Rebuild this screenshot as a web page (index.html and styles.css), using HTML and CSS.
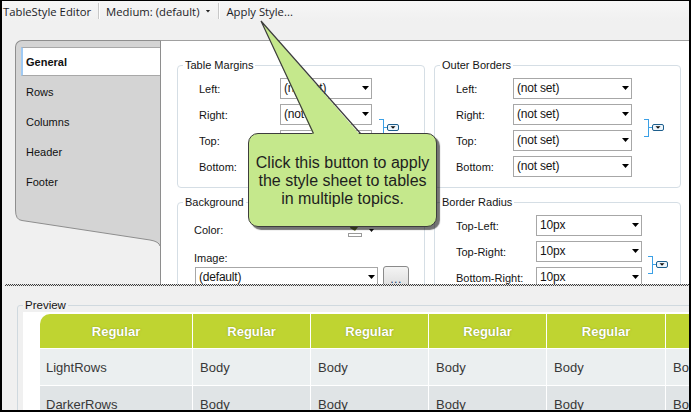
FILE: index.html
```html
<!DOCTYPE html>
<html>
<head>
<meta charset="utf-8">
<title>TableStyle Editor</title>
<link rel="stylesheet" href="styles.css">
</head>
<body>
<div class="screen">
  <div class="toolbar">
    <span class="tb-item">TableStyle Editor</span>
    <span class="tb-sep"></span>
    <span class="tb-item tb-drop">Medium: (default)<span class="tb-arrow"></span></span>
    <span class="tb-sep"></span>
    <span class="tb-item">Apply Style...</span>
  </div>

  <div class="upper">
    <div class="side">
      <div class="tabs">
        <div class="tab active">General</div>
        <div class="tab">Rows</div>
        <div class="tab">Columns</div>
        <div class="tab">Header</div>
        <div class="tab">Footer</div>
      </div>
      <svg class="tabs-foot" width="145" height="45" viewBox="0 0 145 45">
        <path d="M0.5,0 L0.5,5 Q0.5,15 7,15.5 L135,35 Q144,36.5 145,41 L145,0 Z" fill="#d4d4d4"/>
        <path d="M0.5,0 L0.5,5 Q0.5,15 7,15.5 L135,35 Q144,36.5 145,41" fill="none" stroke="#8e8e8e" stroke-width="1"/>
      </svg>
    </div>

    <div class="panel">
      <div class="group">
        <div class="legend">Table Margins</div>
        <div class="fgrid margins">
          <span class="lbl">Left:</span><div class="combo">(not set)<i class="arr"></i></div>
          <span class="lbl">Right:</span><div class="combo">(not set)<i class="arr"></i></div>
          <span class="lbl">Top:</span><div class="combo">(not set)<i class="arr"></i></div>
          <span class="lbl">Bottom:</span><div class="combo">(not set)<i class="arr"></i></div>
          <svg class="bracket" width="20" height="18" viewBox="0 0 20 18">
            <path d="M0,0.5 H4.5 M4.5,0 V18 M0,17.5 H4.5 M4.5,8.5 H8.5" stroke="#3ba0e6" stroke-width="1" fill="none"/>
            <rect x="8.5" y="5.5" width="11" height="6" rx="1.5" fill="#eef6fc" stroke="#1d5e8c"/>
            <polygon points="11.5,7.2 16.5,7.2 14,9.8" fill="#111"/>
          </svg>
        </div>
      </div>

      <div class="group">
        <div class="legend">Outer Borders</div>
        <div class="fgrid outer">
          <span class="lbl">Left:</span><div class="combo">(not set)<i class="arr"></i></div>
          <span class="lbl">Right:</span><div class="combo">(not set)<i class="arr"></i></div>
          <span class="lbl">Top:</span><div class="combo">(not set)<i class="arr"></i></div>
          <span class="lbl">Bottom:</span><div class="combo">(not set)<i class="arr"></i></div>
          <svg class="bracket" width="20" height="18" viewBox="0 0 20 18">
            <path d="M0,0.5 H4.5 M4.5,0 V18 M0,17.5 H4.5 M4.5,8.5 H8.5" stroke="#3ba0e6" stroke-width="1" fill="none"/>
            <rect x="8.5" y="5.5" width="11" height="6" rx="1.5" fill="#eef6fc" stroke="#1d5e8c"/>
            <polygon points="11.5,7.2 16.5,7.2 14,9.8" fill="#111"/>
          </svg>
        </div>
      </div>

      <div class="group">
        <div class="legend">Background</div>
        <div class="bg-body">
          <div class="bg-row">
            <span class="lbl">Color:</span>
            <svg class="swatch" width="30" height="16" viewBox="0 0 30 16">
              <path d="M5,1 L11,5 L8,9 L3,6 Z" fill="#6d7a3a"/>
              <rect x="1.5" y="11.5" width="13" height="3" fill="#fff" stroke="#9a9a9a"/>
              <polygon points="22,7 27,7 24.5,10" fill="#111"/>
            </svg>
          </div>
          <div class="bg-label lbl">Image:</div>
          <div class="bg-img">
            <div class="combo wide">(default)<i class="arr"></i></div>
            <div class="btn">...</div>
          </div>
        </div>
      </div>

      <div class="group">
        <div class="legend">Border Radius</div>
        <div class="fgrid radius">
          <span class="lbl">Top-Left:</span><div class="combo">10px<i class="arr"></i></div>
          <span class="lbl">Top-Right:</span><div class="combo">10px<i class="arr"></i></div>
          <span class="lbl">Bottom-Right:</span><div class="combo">10px<i class="arr"></i></div>
          <span class="lbl">Bottom-Left:</span><div class="combo">10px<i class="arr"></i></div>
          <svg class="bracket" width="20" height="18" viewBox="0 0 20 18">
            <path d="M0,0.5 H4.5 M4.5,0 V18 M0,17.5 H4.5 M4.5,8.5 H8.5" stroke="#3ba0e6" stroke-width="1" fill="none"/>
            <rect x="8.5" y="5.5" width="11" height="6" rx="1.5" fill="#eef6fc" stroke="#1d5e8c"/>
            <polygon points="11.5,7.2 16.5,7.2 14,9.8" fill="#111"/>
          </svg>
        </div>
      </div>
    </div>
  </div>

  <div class="splitter"></div>

  <div class="lower">
    <div class="preview">
      <div class="legend">Preview</div>
      <div class="preview-body">
        <table class="ptable">
          <colgroup>
            <col class="w1"><col class="w2"><col class="w2"><col class="w2"><col class="w3"><col class="w2">
          </colgroup>
          <tr>
            <th class="first">Regular</th><th>Regular</th><th>Regular</th><th>Regular</th><th>Regular</th><th>Regular</th>
          </tr>
          <tr class="light">
            <td>LightRows</td><td>Body</td><td>Body</td><td>Body</td><td>Body</td><td>Body</td>
          </tr>
          <tr class="dark">
            <td>DarkerRows</td><td>Body</td><td>Body</td><td>Body</td><td>Body</td><td>Body</td>
          </tr>
        </table>
      </div>
    </div>
  </div>

  <div class="overlay">
    <div class="callout">Click this button to apply<br>the style sheet to tables<br>in multiple topics.</div>
    <svg class="pointer" width="691" height="412" viewBox="0 0 691 412">
      <polygon points="261,21 313.5,135.5 360.5,135.5" fill="#c5e88c"/>
      <path d="M313.5,133.5 L261,21 L360.5,133.5" fill="none" stroke="#3d3d3d" stroke-width="1.2"/>
    </svg>
  </div>
</div>
</body>
</html>
```

FILE: styles.css
```css
* { box-sizing: border-box; }
body { margin: 0; background: #fff; }

.screen {
  width: 691px;
  height: 412px;
  border-style: solid;
  border-color: #000;
  border-width: 1px 2px 2px 2px;
  overflow: hidden;
  position: relative;
  display: flex;
  flex-direction: column;
  background: #f0f0f0;
  font-family: "Liberation Sans", Arial, sans-serif;
  color: #141414;
}

/* toolbar */
.toolbar {
  height: 20px;
  flex: none;
  display: flex;
  align-items: center;
  padding-left: 1px;
  font-family: "Open Sans", "Liberation Sans", sans-serif;
  font-size: 11.3px;
  color: #1c1c26;
  background: linear-gradient(#f6f6f6, #f0f0f0);
}
.tb-item { white-space: nowrap; }
.tb-drop { display: flex; align-items: center; }
.tb-sep {
  width: 2px;
  height: 16px;
  border-left: 1px solid #c8c8c8;
  border-right: 1px solid #fdfdfd;
  margin: 0 6px 0 7px;
}
.tb-arrow {
  width: 5px;
  height: 3px;
  background: #222;
  clip-path: polygon(0 0, 100% 0, 50% 100%);
  margin-left: 6px;
  margin-right: 1px;
}

/* upper editor */
.upper {
  height: 263px;
  flex: none;
  display: flex;
  padding-top: 19px;
  overflow: hidden;
}
.side {
  width: 158px;
  flex: none;
  padding-left: 13px;
}
.tabs {
  height: 165px;
  background: #d4d4d4;
  border-left: 1px solid #8e8e8e;
  border-top: 1px solid #8e8e8e;
  border-top-left-radius: 7px;
  padding-top: 6px;
  font-size: 11px;
  color: #101010;
}
.tab {
  height: 30px;
  display: flex;
  align-items: center;
  padding-left: 10px;
}
.tab.active {
  height: 29px;
  margin: 0 0 1px 5px;
  padding-left: 3px;
  background: #fff;
  border-left: 2px solid #9fcaf4;
  border-top: 1px solid #a8a8a8;
  border-bottom: 1px solid #a8a8a8;
  font-weight: bold;
}
.tabs-foot { display: block; }

.panel {
  flex: 1;
  background: #fff;
  border-left: 1px solid #8e8e8e;
  border-top: 1px solid #a0a0a0;
  display: grid;
  grid-template-columns: 248px 247px;
  column-gap: 9px;
  row-gap: 14px;
  align-content: start;
  padding: 24px 8px 0 16px;
}

.group {
  border: 1px solid #d5dee5;
  border-radius: 4px;
}
.legend {
  width: fit-content;
  margin: -8px 0 0 5px;
  padding: 0 2px;
  background: #fff;
  line-height: 14px;
  font-size: 11px;
  white-space: nowrap;
}
.lbl { font-size: 11px; white-space: nowrap; }

.fgrid {
  display: grid;
  row-gap: 5px;
  align-items: center;
  margin-top: 6px;
  padding: 0 0 10px 21px;
}
.fgrid .lbl { grid-column: 1; }
.fgrid .combo { grid-column: 2; }
.fgrid .bracket { grid-column: 3; grid-row: 1 / 5; align-self: center; }
.margins { grid-template-columns: 81px 92px auto; }
.margins .bracket { margin-left: 7px; }
.outer { grid-template-columns: 57px 119px auto; }
.outer .bracket { margin-left: 12px; }
.radius { grid-template-columns: 80px 106px auto; }
.radius .bracket { margin-left: 6px; }

.combo {
  height: 21px;
  border: 1px solid #a7a7a7;
  background: #fff;
  display: flex;
  align-items: center;
  padding-left: 3px;
  padding-bottom: 1px;
  font-size: 12px;
  letter-spacing: -0.2px;
  white-space: nowrap;
}
.arr {
  width: 7px;
  height: 4px;
  background: #000;
  clip-path: polygon(0 0, 100% 0, 50% 100%);
  margin-left: auto;
  margin-right: 2px;
}

.bg-body { padding: 11px 15px 0 16px; }
.bg-row {
  height: 20px;
  display: flex;
  align-items: center;
}
.swatch { margin-left: auto; margin-right: 32px; }
.bg-label { display: block; line-height: 14px; margin-top: 11px; }
.bg-img { display: flex; margin-top: 2px; }
.combo.wide { width: 183px; margin-left: 1px; }
.btn {
  width: 26px;
  height: 23px;
  margin: -1px 0 0 5px;
  border: 1px solid #8a8a8a;
  border-radius: 3px;
  background: linear-gradient(#f4f4f4, #dcdcdc);
  font-size: 12px;
  color: #1d3d6a;
  text-align: center;
  line-height: 24px;
  letter-spacing: 0.5px;
}

/* splitter */
.splitter {
  height: 2px;
  flex: none;
  margin-left: 3px;
  background: repeating-conic-gradient(#3c3c3c 0 25%, #e6e6e6 0 50%) 0 0 / 2px 2px;
}

/* lower preview */
.lower {
  flex: 1;
  overflow: hidden;
  padding: 19px 0 0 15px;
}
.preview {
  width: 780px;
  height: 140px;
  border: 1px solid #d0d9df;
  border-radius: 3px;
  padding-left: 5px;
}
.preview .legend {
  margin-left: 0;
  background: #f0f0f0;
  font-size: 11.5px;
}
.preview-body {
  background: #fff;
  height: 120px;
  padding: 2px 0 0 17px;
}
.ptable {
  border-collapse: separate;
  border-spacing: 0;
  table-layout: fixed;
  width: 744px;
  font-size: 13px;
}
.w1 { width: 153px; }
.w2 { width: 118px; }
.w3 { width: 119px; }
.ptable th {
  height: 35px;
  background: #bfd431;
  color: #fff;
  font-weight: bold;
  text-align: center;
  border-right: 1px solid #fff;
  border-bottom: 1px solid #fff;
  padding: 0;
  text-shadow: 0 0 1.5px rgba(70, 80, 20, 0.55);
}
.ptable th.first { border-top-left-radius: 10px; }
.ptable td {
  height: 37px;
  border-right: 1px solid #fff;
  border-bottom: 1px solid #fff;
  padding: 0 0 0 7px;
  color: #383838;
  white-space: nowrap;
}
.ptable td:first-child { padding-left: 6px; }
.light td { background: #ebeff0; }
.dark td { background: #e0e4e6; }

/* callout overlay */
.overlay {
  position: absolute;
  left: -2px;
  top: -1px;
  width: 691px;
  height: 412px;
  pointer-events: none;
}
.callout {
  position: absolute;
  left: 248px;
  top: 133px;
  width: 189px;
  height: 94px;
  background: #c5e88c;
  border: 1.5px solid #3d3d3d;
  border-radius: 10px;
  box-shadow: 3px 3px 1px rgba(0, 0, 0, 0.55);
  font-family: "Liberation Sans", Arial, sans-serif;
  font-size: 16px;
  line-height: 18px;
  color: #1e1e1e;
  text-align: center;
  padding-top: 20px;
  white-space: nowrap;
}
.pointer { position: absolute; left: 0; top: 0; }
```
